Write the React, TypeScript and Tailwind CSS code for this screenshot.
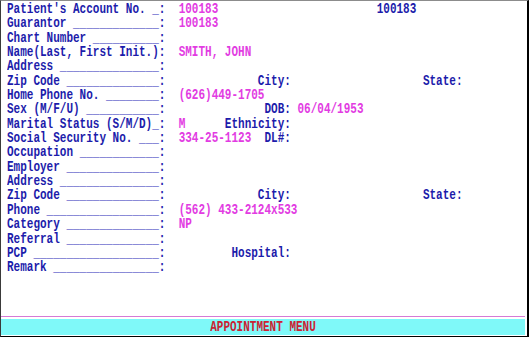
import React from 'react';

type Tone = 'b' | 'u' | 'm';
type Seg = [string, Tone];

const toneClass: Record<Tone, string> = {
  b: 'text-[#1c1cab]',
  u: 'text-[#6464cc]',
  m: 'text-[#e23ce2]',
};

// label padded with underscores so the colon lands on column 23
const field = (label: string, bars: number, gap = ' '): Seg[] => [
  [label + (bars > 0 ? gap : ''), 'b'],
  ['_'.repeat(bars), 'u'],
  [':', 'b'],
];

const sp = (n: number) => ' '.repeat(n);

const rows: Seg[][] = [
  [...field("Patient's Account No.", 1), [sp(2), 'b'], ['100183', 'm'], [sp(24), 'b'], ['100183', 'b']],
  [...field('Guarantor', 13), [sp(2), 'b'], ['100183', 'm']],
  [...field('Chart Number', 10)],
  [...field('Name(Last, First Init.)', 0), [sp(2), 'b'], ['SMITH, JOHN', 'm']],
  [...field('Address', 15)],
  [...field('Zip Code', 14), [sp(14) + 'City:' + sp(20) + 'State:', 'b']],
  [...field('Home Phone No.', 8), [sp(2), 'b'], ['(626)449-1705', 'm']],
  [...field('Sex (M/F/U)', 11), [sp(15) + 'DOB: ', 'b'], ['06/04/1953', 'm']],
  [...field('Marital Status (S/M/D)', 1, ''), [sp(2), 'b'], ['M', 'm'], [sp(6) + 'Ethnicity:', 'b']],
  [...field('Social Security No.', 3), [sp(2), 'b'], ['334-25-1123', 'm'], [sp(2) + 'DL#:', 'b']],
  [...field('Occupation', 12)],
  [...field('Employer', 14)],
  [...field('Address', 15)],
  [...field('Zip Code', 14), [sp(14) + 'City:' + sp(20) + 'State:', 'b']],
  [...field('Phone', 17), [sp(2), 'b'], ['(562) 433-2124x533', 'm']],
  [...field('Category', 14), [sp(2), 'b'], ['NP', 'm']],
  [...field('Referral', 14)],
  [...field('PCP', 19), [sp(10) + 'Hospital:', 'b']],
  [...field('Remark', 16)],
];

export default function App() {
  return (
    <div className="w-[529px] h-[340px] bg-white overflow-hidden font-['Liberation_Mono',monospace] font-bold text-[11px]">
      <div className="h-[337px] flex flex-col border-l border-l-[#3a3a3a] border-t border-t-[#8c8c8c] border-r-2 border-r-black border-b border-b-black">
        <div className="pl-[6px] pt-[1px]">
          {rows.map((row, i) => (
            <div key={i} className="h-[14.35px] leading-[14.35px] whitespace-pre">
              <span className="inline-block scale-y-[1.3]">
                {row.map(([text, tone], j) => (
                  <span key={j} className={toneClass[tone]}>{text}</span>
                ))}
              </span>
            </div>
          ))}
        </div>
        <div className="flex-1" />
        <div className="mr-[2px] h-px bg-[#d67ad6]" />
        <div className="mr-[2px] mt-[2px] mb-[1px] h-[16px] bg-[#7ff9f9] flex items-center justify-center leading-none">
          <span className="inline-block scale-y-[1.3] text-[#cc2233] whitespace-pre">APPOINTMENT MENU</span>
        </div>
      </div>
    </div>
  );
}
